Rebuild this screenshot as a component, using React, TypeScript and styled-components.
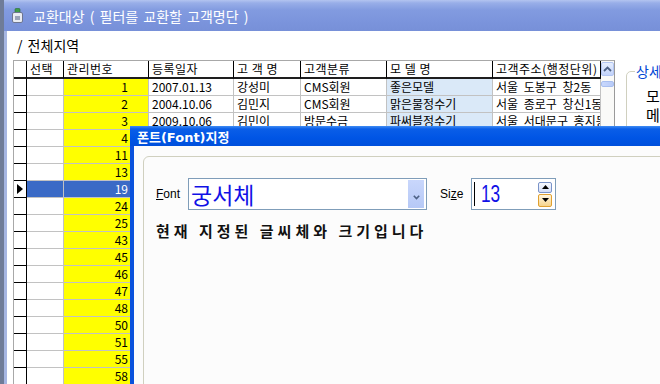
import React from "react";
import styled, { createGlobalStyle } from "styled-components";

const GlobalStyle = createGlobalStyle`
  html, body {
    margin: 0;
    padding: 0;
    overflow: hidden;
  }
  body {
    font-family: "Noto Sans CJK KR", "Liberation Sans", sans-serif;
    color: #000;
  }
`;

type Customer = {
  no: number;
  date?: string;
  name?: string;
  kind?: string;
  model?: string;
  addr?: string;
};

const customers: Customer[] = [
  { no: 1, date: "2007.01.13", name: "강성미", kind: "CMS회원", model: "좋은모델", addr: "서울 도봉구 창2동" },
  { no: 2, date: "2004.10.06", name: "김민지", kind: "CMS회원", model: "맑은물정수기", addr: "서울 종로구 창신1동" },
  { no: 3, date: "2009.10.06", name: "김민이", kind: "방문수금", model: "파써블정수기", addr: "서울 서대문구 홍지동" },
  { no: 4 }, { no: 11 }, { no: 13 }, { no: 19 }, { no: 24 }, { no: 25 },
  { no: 43 }, { no: 45 }, { no: 46 }, { no: 47 }, { no: 48 }, { no: 50 },
  { no: 51 }, { no: 55 }, { no: 58 },
];

const selectedNo = 19;
const headers = ["선택", "관리번호", "등록일자", "고 객 명", "고객분류", "모 델 명", "고객주소(행정단위)"];
const COLS = "13px 37px 85px 85px 67px 86px 106px 108px";

function App() {
  return (
    <>
      <GlobalStyle />
      <Screen>
        <Window>
          <TitleBar>
            <AppIcon />
            <span>교환대상 ( 필터를 교환할 고객명단 )</span>
          </TitleBar>
          <WindowBody>
            <PathLabel>/ 전체지역</PathLabel>
            <Content>
              <GridBox>
                <Table>
                  <HeaderRow>
                    <HeaderCell />
                    {headers.map((h) => (
                      <HeaderCell key={h}>{h}</HeaderCell>
                    ))}
                  </HeaderRow>
                  {customers.map((c) => {
                    const sel = c.no === selectedNo;
                    return (
                      <DataRow key={c.no}>
                        <Indicator $current={sel} />
                        <Cell $selected={sel} />
                        <Cell $tone="yellow" $selected={sel} $right>{c.no}</Cell>
                        <Cell $selected={sel}>{c.date}</Cell>
                        <Cell $selected={sel}>{c.name}</Cell>
                        <Cell $selected={sel}>{c.kind}</Cell>
                        <Cell $tone="sky" $selected={sel}>{c.model}</Cell>
                        <Cell $selected={sel}>{c.addr}</Cell>
                      </DataRow>
                    );
                  })}
                </Table>
                <ScrollBar>
                  <ScrollButton>
                    <svg width="9" height="6" viewBox="0 0 9 6">
                      <path d="M1 5 L4.5 1.5 L8 5" fill="none" stroke="#4D6185" strokeWidth="1.8" />
                    </svg>
                  </ScrollButton>
                  <ScrollThumb />
                </ScrollBar>
              </GridBox>
              <DetailBox>
                <DetailLegend>상세</DetailLegend>
                <DetailLine>모</DetailLine>
                <DetailLine>메</DetailLine>
              </DetailBox>
            </Content>
          </WindowBody>
        </Window>

        <Dialog>
          <DialogTitle>폰트(Font)지정</DialogTitle>
          <DialogBody>
            <GroupBox>
              <FontRow>
                <FieldLabel><u>F</u>ont</FieldLabel>
                <Combo>
                  <ComboText>궁서체</ComboText>
                  <DropButton>
                    <svg width="7" height="5" viewBox="0 0 7 5">
                      <path d="M0.8 0.8 L3.5 3.6 L6.2 0.8" fill="none" stroke="#4D6185" strokeWidth="1.6" />
                    </svg>
                  </DropButton>
                </Combo>
                <FieldLabel $gap={13}>Si<u>z</u>e</FieldLabel>
                <SpinBox>
                  <Caret />
                  <SpinText>13</SpinText>
                  <SpinButtons>
                    <SpinButton>
                      <svg width="7" height="4" viewBox="0 0 7 4"><path d="M0 4 L3.5 0 L7 4 Z" fill="#000" /></svg>
                    </SpinButton>
                    <SpinButton $hot>
                      <svg width="7" height="4" viewBox="0 0 7 4"><path d="M0 0 L3.5 4 L7 0 Z" fill="#000" /></svg>
                    </SpinButton>
                  </SpinButtons>
                </SpinBox>
              </FontRow>
              <Preview>현재 지정된 글씨체와 크기입니다</Preview>
            </GroupBox>
          </DialogBody>
        </Dialog>
      </Screen>
    </>
  );
}

function AppIcon() {
  return (
    <svg width="11" height="15" viewBox="0 0 11 15">
      <rect x="3" y="0.5" width="5" height="4" rx="1" fill="#3E9B4A" stroke="#2C6B33" strokeWidth="0.6" />
      <rect x="0.5" y="4.5" width="10" height="10" rx="1.5" fill="#E9ECF2" stroke="#6E7690" />
      <rect x="3" y="8" width="5" height="4" fill="#9AA3B8" />
    </svg>
  );
}

const Screen = styled.div`
  position: relative;
  display: flex;
  width: 660px;
  height: 384px;
  overflow: hidden;
  padding-left: 4px;
  box-sizing: border-box;
  background: #6F7C98;
`;

const Window = styled.div`
  flex: 1;
  display: flex;
  flex-direction: column;
  min-width: 0;
`;

const TitleBar = styled.div`
  height: 31px;
  flex-shrink: 0;
  display: flex;
  align-items: center;
  gap: 10px;
  padding-left: 8px;
  color: #fff;
  font-size: 14px;
  word-spacing: 2px;
  background: linear-gradient(180deg, #B3C4F0 0px, #98AEE8 3px, #829BE0 10px, #7B94DC 22px, #7790D8 31px);
`;

const WindowBody = styled.div`
  flex: 1;
  display: flex;
  flex-direction: column;
  border-left: 3px solid #A6B6E2;
  padding-left: 6px;
  background: #fff;
`;

const PathLabel = styled.div`
  height: 29px;
  line-height: 29px;
  padding-left: 4px;
  font-size: 14px;
  word-spacing: 2px;
`;

const Content = styled.div`
  display: flex;
  align-items: flex-start;
`;

const GridBox = styled.div`
  display: flex;
  border-top: 1px solid #A8A8A8;
  border-left: 1px solid #A8A8A8;
  border-right: 1px solid #9A9A9A;
  flex-shrink: 0;
`;

const Table = styled.div`
  display: flex;
  flex-direction: column;
  font-size: 12px;
`;

const HeaderRow = styled.div`
  display: grid;
  grid-template-columns: ${COLS};
  height: 18px;
  background: #fff;
`;

const HeaderCell = styled.div`
  box-sizing: border-box;
  border-right: 1px solid #000;
  border-bottom: 2px solid #1E1E1E;
  padding-left: 3px;
  line-height: 16px;
  letter-spacing: 0.5px;
  white-space: nowrap;
  overflow: hidden;
`;

const DataRow = styled.div`
  display: grid;
  grid-template-columns: ${COLS};
  height: 17px;
`;

const Indicator = styled.div<{ $current?: boolean }>`
  position: relative;
  box-sizing: border-box;
  background: #fff;
  border-right: 1px solid #000;
  border-bottom: 1px solid #000;
  &::before {
    content: "";
    display: ${(p) => (p.$current ? "block" : "none")};
    position: absolute;
    left: 3px;
    top: 3px;
    border-left: 6px solid #000;
    border-top: 5px solid transparent;
    border-bottom: 5px solid transparent;
  }
`;

const toneColor = { plain: "#fff", yellow: "#FFFF00", sky: "#DAE9F8" };

const Cell = styled.div<{ $tone?: "plain" | "yellow" | "sky"; $selected?: boolean; $right?: boolean }>`
  box-sizing: border-box;
  border-right: 1px solid #C2C2C2;
  border-bottom: 1px solid #C2C2C2;
  background: ${(p) => (p.$selected ? "#3A6AC6" : toneColor[p.$tone ?? "plain"])};
  color: ${(p) => (p.$selected ? "#fff" : "#000")};
  text-align: ${(p) => (p.$right ? "right" : "left")};
  padding: ${(p) => (p.$right ? "0 20px 0 0" : "0 0 0 3px")};
  line-height: 16px;
  word-spacing: 3px;
  white-space: nowrap;
  overflow: hidden;
`;

const ScrollBar = styled.div`
  width: 13px;
  display: flex;
  flex-direction: column;
  align-items: center;
  padding-top: 1px;
  gap: 5px;
  background: #FAFAF8;
`;

const ScrollButton = styled.div`
  width: 13px;
  height: 14px;
  box-sizing: border-box;
  display: flex;
  align-items: center;
  justify-content: center;
  border: 1px solid #B4C6F2;
  border-radius: 2px;
  background: linear-gradient(180deg, #E6EEFE, #C2D3FA);
`;

const ScrollThumb = styled.div`
  width: 13px;
  height: 6px;
  box-sizing: border-box;
  border: 1px solid #A9BFF0;
  border-radius: 2px;
  background: linear-gradient(90deg, #C9D8FC, #B8CBF8);
`;

const DetailBox = styled.fieldset`
  margin: 2px 0 0 11px;
  padding: 0 0 0 8px;
  width: 120px;
  height: 300px;
  flex-shrink: 0;
  border: 1px solid #D0D0BF;
  border-radius: 5px;
`;

const DetailLegend = styled.legend`
  padding: 0 1px;
  color: #0046D5;
  font-size: 14px;
  line-height: 18px;
`;

const DetailLine = styled.div`
  padding-left: 11px;
  font-size: 15px;
  line-height: 19px;
  &:first-of-type {
    margin-top: 6px;
  }
`;

const Dialog = styled.div`
  position: absolute;
  left: 130px;
  top: 126px;
  width: 560px;
  height: 290px;
  display: flex;
  flex-direction: column;
`;

const DialogTitle = styled.div`
  height: 20px;
  flex-shrink: 0;
  padding-left: 7px;
  display: flex;
  align-items: center;
  color: #fff;
  font-weight: bold;
  font-size: 13px;
  font-family: "DejaVu Sans", "Noto Sans CJK KR", sans-serif;
  background: linear-gradient(180deg, #3F8CF3 0px, #0A5EE8 3px, #0055E5 12px, #0050DC 20px);
`;

const DialogBody = styled.div`
  flex: 1;
  border-left: 4px solid #0A52DC;
  background: #FCFCFC;
  padding: 10px 9px;
`;

const GroupBox = styled.fieldset`
  margin: 0;
  padding: 21px 0 0 12px;
  height: 260px;
  border: 1px solid #D0D0BF;
  border-radius: 6px;
  box-sizing: border-box;
`;

const FontRow = styled.div`
  display: flex;
  align-items: center;
  height: 32px;
`;

const FieldLabel = styled.span<{ $gap?: number }>`
  margin-left: ${(p) => p.$gap ?? 0}px;
  font-family: "Liberation Sans", sans-serif;
  font-size: 12px;
  color: #000;
  u {
    text-decoration-thickness: 1px;
    text-underline-offset: 1px;
  }
`;

const Combo = styled.div`
  margin-left: 8px;
  width: 239px;
  height: 32px;
  box-sizing: border-box;
  display: flex;
  align-items: center;
  border: 1px solid #7F9DB9;
  background: #fff;
`;

const ComboText = styled.div`
  flex: 1;
  padding-left: 2px;
  font-size: 23px;
  line-height: 30px;
  color: #1111E6;
`;

const DropButton = styled.div`
  width: 16px;
  height: 28px;
  margin-right: 2px;
  display: flex;
  align-items: center;
  justify-content: center;
  padding-top: 6px;
  box-sizing: border-box;
  background: linear-gradient(180deg, #C9D7FC, #B6C9F6);
`;

const SpinBox = styled.div`
  margin-left: 8px;
  width: 85px;
  height: 32px;
  box-sizing: border-box;
  display: flex;
  align-items: center;
  border: 1px solid #7F9DB9;
  background: #fff;
`;

const Caret = styled.div`
  width: 1px;
  height: 24px;
  margin-left: 2px;
  background: #000;
`;

const SpinText = styled.span`
  display: inline-block;
  margin-left: 6px;
  font-family: "Liberation Sans", sans-serif;
  font-size: 24px;
  color: #1111E6;
  transform: scaleX(0.72);
  transform-origin: left center;
`;

const SpinButtons = styled.div`
  margin-left: auto;
  margin-right: 3px;
  display: flex;
  flex-direction: column;
  gap: 1px;
`;

const SpinButton = styled.div<{ $hot?: boolean }>`
  width: 14px;
  height: ${(p) => (p.$hot ? 13 : 11)}px;
  box-sizing: border-box;
  display: flex;
  align-items: center;
  justify-content: center;
  border: 1px solid ${(p) => (p.$hot ? "#E0A030" : "#7A93C8")};
  border-radius: 2px;
  background: ${(p) =>
    p.$hot ? "linear-gradient(180deg, #FFF6E0, #F6D48C)" : "linear-gradient(180deg, #F7F9FF, #D4DEF6)"};
`;

const Preview = styled.div`
  margin-top: 11px;
  font-size: 15px;
  font-weight: bold;
  letter-spacing: 4px;
  line-height: 20px;
  color: #111;
`;

export default App;
